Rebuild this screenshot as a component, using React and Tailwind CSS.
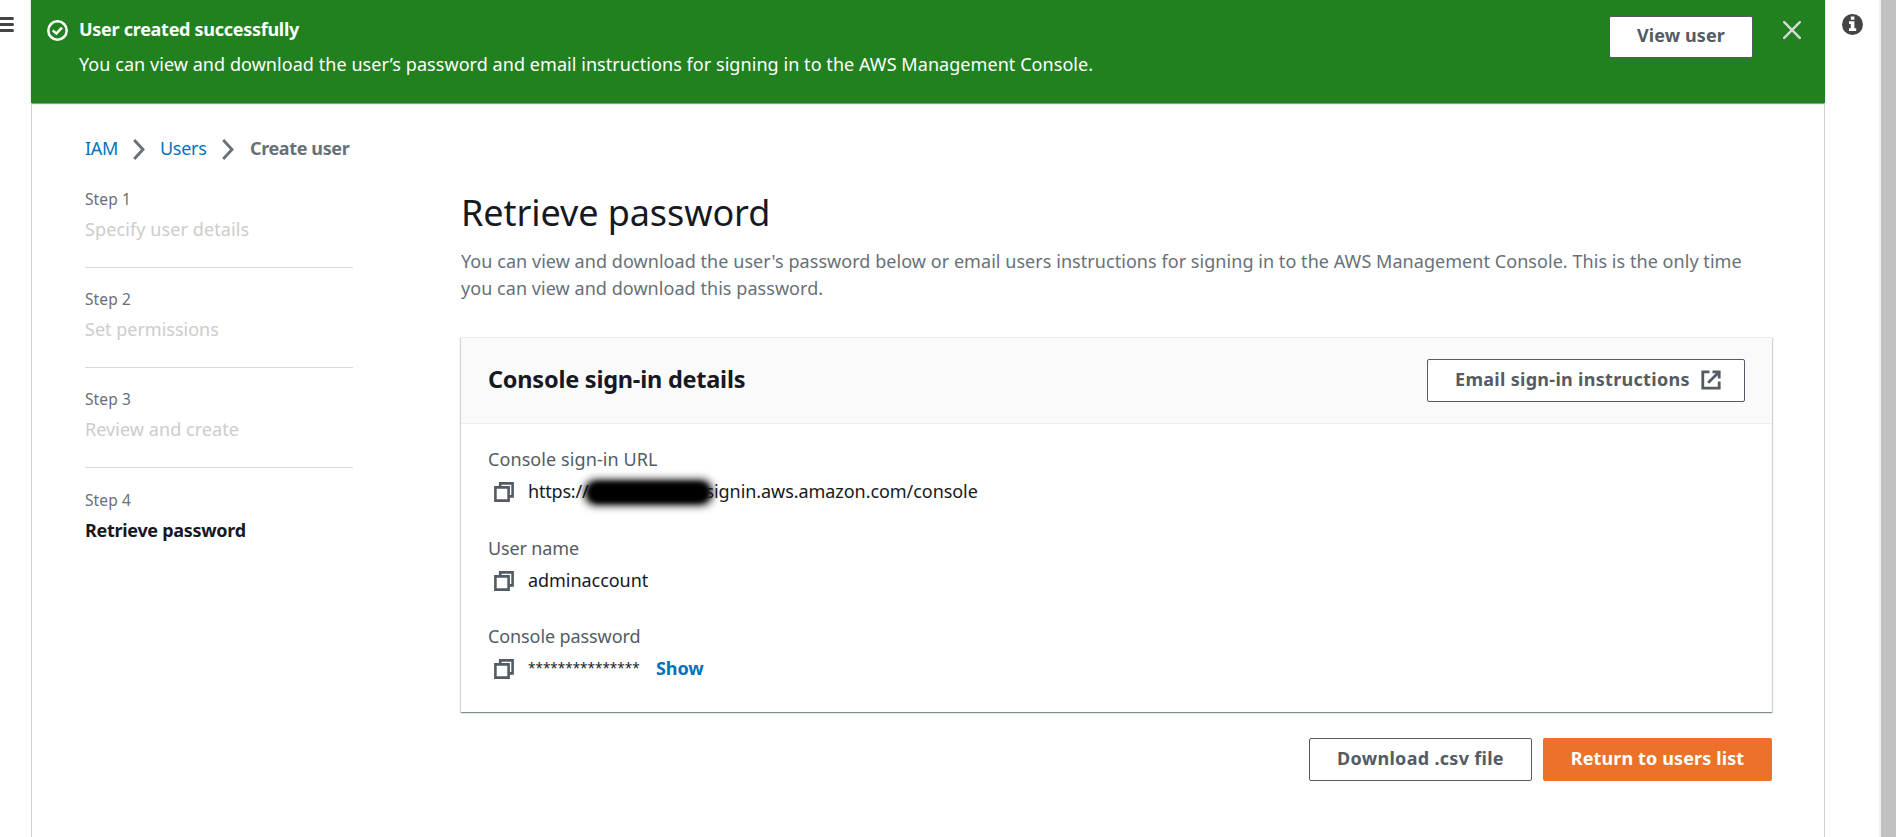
const steps = [
  { label: 'Step 1', title: 'Specify user details', tracking: 'tracking-[0.1px]' },
  { label: 'Step 2', title: 'Set permissions', tracking: 'tracking-[0px]' },
  { label: 'Step 3', title: 'Review and create', tracking: 'tracking-[0.06px]' },
  { label: 'Step 4', title: 'Retrieve password', current: true },
];

function Chevron() {
  return (
    <svg className="mt-[3px] h-[21px] w-3" viewBox="0 0 12 21" fill="none" stroke="#687078" strokeWidth="2.9">
      <path d="M1.2 1 10 10.5 1.2 20" />
    </svg>
  );
}

function CopyIcon() {
  return (
    <svg className="mt-[5px] ml-[6px] size-5 shrink-0" viewBox="0 0 20 20" fill="none" stroke="#545b64" strokeWidth="2.6">
      <path d="M1.4 5.4H14.6V18.6H1.4Z" />
      <path d="M6.2 5.4V1.4H18.6V14.4H14.6" />
    </svg>
  );
}

function ExternalIcon() {
  return (
    <svg className="mt-px size-5 shrink-0" viewBox="0 0 20 20" fill="none" stroke="#545b64" strokeWidth="2.8">
      <path d="M8.5 1.8H1.8V18.2H18.2V11.5" />
      <path d="M11.5 1.8H18.2V8.5" />
      <path d="M7.2 12.8 17.5 2.5" />
    </svg>
  );
}

function Field({ label, labelClass, children }) {
  return (
    <div>
      <div className={`leading-7 text-[#545b64] ${labelClass}`}>{label}</div>
      <div className="mt-1 flex h-7 leading-7 text-[#16191f]">
        <CopyIcon />
        <div className="ml-[14px] flex whitespace-nowrap">{children}</div>
      </div>
    </div>
  );
}

export default function App() {
  return (
    <div className="flex h-[837px] overflow-hidden bg-white font-['Noto_Sans',sans-serif] text-[18px] text-[#16191f]">
      <aside className="w-[31px] shrink-0 pt-[17px]">
        <div className="flex w-[14px] flex-col gap-[3px]">
          <div className="h-[3px] rounded-r-sm bg-[#444]" />
          <div className="h-[3px] rounded-r-sm bg-[#444]" />
          <div className="h-[3px] rounded-r-sm bg-[#444]" />
        </div>
      </aside>

      <main className="flex w-[1794px] shrink-0 flex-col">
        <header className="flex h-[103px] shrink-0 bg-[#22811f] pl-4 text-white shadow-[0_1px_1px_0_#8f96a3]">
          <svg className="mt-5 size-[21px]" viewBox="0 0 21 21" fill="none" stroke="#fff" strokeWidth="2.5">
            <circle cx="10.5" cy="10.5" r="9.2" />
            <path d="M5.8 10.4 9.3 13.6 15 7.6" />
          </svg>
          <div className="ml-[11px] pt-[15px] whitespace-nowrap">
            <div className="leading-7 font-bold tracking-[-0.28px]">User created successfully</div>
            <div className="mt-[7px] leading-7 tracking-[0.06px]">
              You can view and download the user’s password and email instructions for signing in to the AWS Management Console.
            </div>
          </div>
          <button className="mt-4 ml-auto h-[42px] w-[144px] rounded-[2px] border border-[#545b64] bg-white pb-[3px] font-bold tracking-[0.1px] whitespace-nowrap text-[#545b64]">
            View user
          </button>
          <svg className="mt-[21px] mr-6 ml-[30px] size-[18px]" viewBox="0 0 18 18" fill="none" stroke="#d5dbdb" strokeWidth="2.4" strokeLinecap="round">
            <path d="M1.2 1.2 16.8 16.8M16.8 1.2 1.2 16.8" />
          </svg>
        </header>

        <div className="flex-1 border-x border-[#ccd1d1] pt-[31px] pr-[52px] pl-[53px]">
          <nav className="flex h-7 items-center leading-7 whitespace-nowrap text-[#0073bb]">
            <a className="w-12 tracking-[-0.3px]">IAM</a>
            <Chevron />
            <a className="ml-[15px] w-[62px] tracking-[-0.3px]">Users</a>
            <Chevron />
            <span className="ml-4 font-bold tracking-[-0.38px] text-[#687078]">Create user</span>
          </nav>

          <div className="mt-[27px] flex">
            <ol className="-mt-[0.4px] w-[268px] shrink-0">
              {steps.map((step) => (
                <li key={step.label} className={step.current ? '' : 'mb-[21.3px] border-b border-[#d5dbdb] pb-6'}>
                  <div className="text-[15.5px] leading-5 tracking-[0.1px] text-[#687078]">{step.label}</div>
                  <div
                    className={
                      step.current
                        ? 'mt-1.5 leading-7 font-bold tracking-[-0.3px] text-[#16191f]'
                        : `mt-1.5 leading-7 text-[#ccc] ${step.tracking}`
                    }
                  >
                    {step.title}
                  </div>
                </li>
              ))}
            </ol>

            <div className="ml-[108px] flex-1">
              <h1 className="mt-0.5 text-[36px] leading-[44px] tracking-[-0.08px]">Retrieve password</h1>
              <p className="mt-[13px] leading-[27px] tracking-[0.053px] whitespace-nowrap text-[#687078]">
                You can view and download the user's password below or email users instructions for signing in to the AWS Management Console. This is the only time
                <br />
                you can view and download this password.
              </p>

              <section className="mt-[35px] h-[375px] border-t border-[#eaeded] bg-white shadow-[0_1px_1px_0_rgba(0,28,36,0.3),1px_1px_1px_0_rgba(0,28,36,0.15),-1px_1px_1px_0_rgba(0,28,36,0.15)]">
                <div className="flex h-[86px] items-center justify-between border-b border-[#eaeded] bg-[#fafafa] pr-[27px] pl-[27px]">
                  <h2 className="pb-0.5 text-[23.5px] font-bold tracking-[-0.23px]">Console sign-in details</h2>
                  <button className="flex h-[43px] w-[318px] items-center justify-between rounded-[2px] border border-[#545b64] bg-white pr-[23px] pb-0.5 pl-[27px] font-bold tracking-[0.3px] whitespace-nowrap text-[#545b64]">
                    Email sign-in instructions
                    <ExternalIcon />
                  </button>
                </div>
                <div className="flex flex-col gap-[28.5px] pt-[21px] pl-[27px]">
                  <Field label="Console sign-in URL" labelClass="tracking-[0.09px]">
                    <span className="tracking-[-0.2px]">https://</span>
                    <span className="relative w-[117px]">
                      <span className="absolute top-[3px] -left-[3px] h-[25px] w-[127px] rounded-[10px] bg-black blur-[4px]" />
                      <span className="absolute top-[6px] left-[1px] h-[19px] w-[119px] rounded-[9px] bg-black blur-[2.5px]" />
                    </span>
                    <span className="relative tracking-[-0.06px]">signin.aws.amazon.com/console</span>
                  </Field>
                  <Field label="User name" labelClass="tracking-[-0.15px]">
                    <span className="tracking-[-0.05px]">adminaccount</span>
                  </Field>
                  <Field label="Console password" labelClass="tracking-[-0.1px]">
                    <span className="w-32 text-[13.5px]">***************</span>
                    <a className="font-bold tracking-[-0.05px] text-[#0073bb]">Show</a>
                  </Field>
                </div>
              </section>

              <div className="mt-[26px] flex justify-end gap-[11px]">
                <button className="h-[43px] w-[223px] rounded-[2px] border border-[#545b64] bg-white pb-0.5 font-bold tracking-[0.3px] whitespace-nowrap text-[#545b64]">
                  Download .csv file
                </button>
                <button className="h-[43px] w-[229px] rounded-[2px] bg-[#ec7229] pb-0.5 font-bold tracking-[0.12px] whitespace-nowrap text-white">
                  Return to users list
                </button>
              </div>
            </div>
          </div>
        </div>
      </main>

      <aside className="flex-1 pt-[14px] pl-[17px]">
        <svg className="size-[21px]" viewBox="0 0 21 21">
          <circle cx="10.5" cy="10.5" r="10.5" fill="#444" />
          <path d="M8.8 2.6H12.4V5.8H8.8ZM7 7.2H12.4V14.2H14.2V17H7V14.2H8.8V10H7Z" fill="#fff" />
        </svg>
      </aside>
      <div className="w-[17px] shrink-0 border-l-2 border-[#f1f1f1] bg-[#c1c1c1]" />
    </div>
  );
}
